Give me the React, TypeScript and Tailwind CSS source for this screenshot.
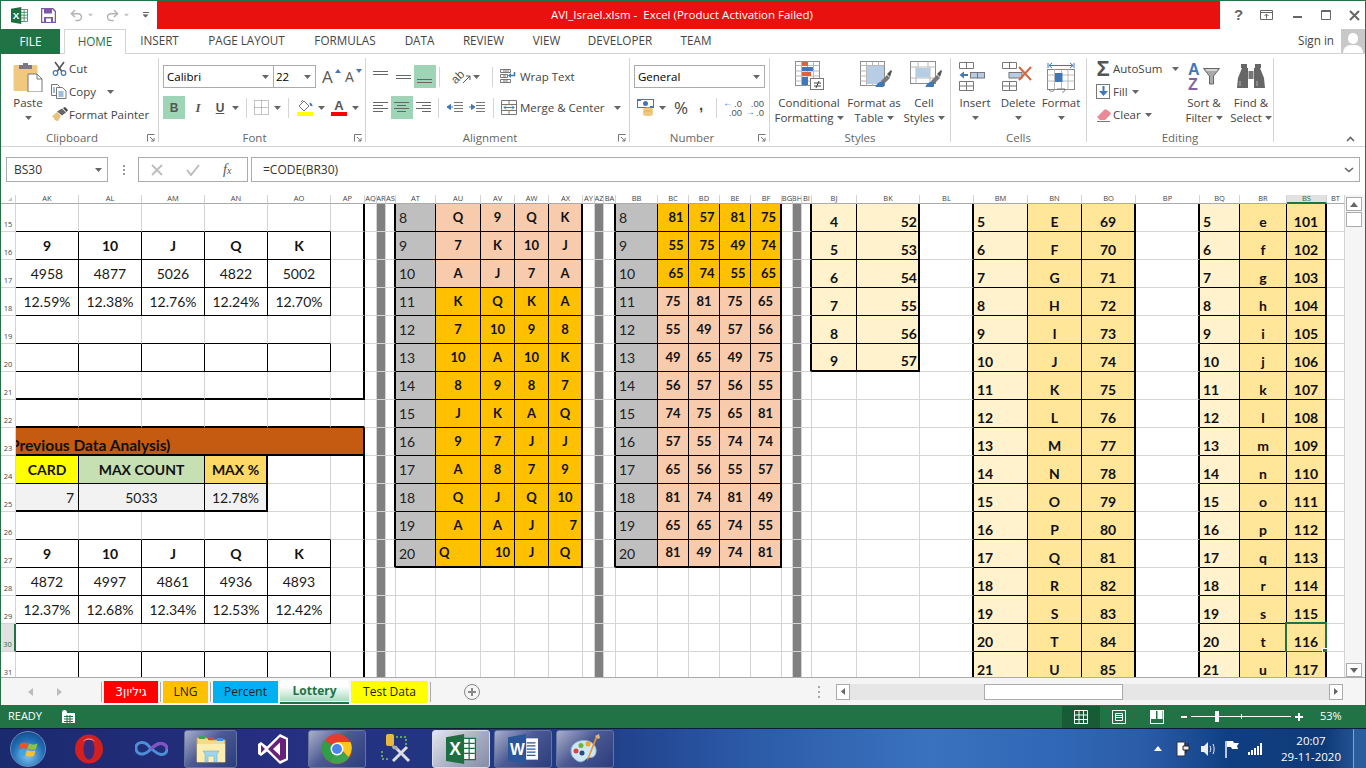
import React from "react";
import clsx from "clsx";
import { Undo2, Redo2 } from "lucide-react";

type Line = "g" | "k" | "K";
type Spec = {
  t?: string;
  cls?: string;
  r?: Line;
  b?: Line;
  span?: number;
  sel?: boolean;
};

const COLS = "AK AL AM AN AO AP AQ AR AS AT AU AV AW AX AY AZ BA BB BC BD BE BF BG BH BI BJ BK BL BM BN BO BP BQ BR BS BT".split(" ");

const rightLine: Record<Line, string> = {
  g: "border-r border-r-[#d4d4d4]",
  k: "border-r border-r-black",
  K: "border-r-2 border-r-black",
};
const bottomLine: Record<Line, string> = {
  g: "border-b border-b-[#d4d4d4]",
  k: "border-b border-b-black",
  K: "border-b-2 border-b-black",
};

const sheet = new Map<string, Spec>();
const put = (col: string, row: number, s: Spec) =>
  sheet.set(col + row, { ...sheet.get(col + row), ...s });
const range = (a: number, b: number) => Array.from({ length: b - a + 1 }, (_, i) => a + i);

const BOLD = "font-bold text-[#111]";
const LEFT = ["AK", "AL", "AM", "AN", "AO"];
const HEADS = ["9", "10", "J", "Q", "K"];

function statBlock(top: number, counts: string[], pcts: string[]) {
  LEFT.forEach((c, i) => {
    put(c, top - 1, { b: "k" });
    put(c, top, { t: HEADS[i], cls: BOLD, r: "k", b: "k" });
    put(c, top + 1, { t: counts[i], r: "k", b: "k" });
    put(c, top + 2, { t: pcts[i], r: "k", b: "k" });
  });
}
statBlock(16, ["4958", "4877", "5026", "4822", "5002"], ["12.59%", "12.38%", "12.76%", "12.24%", "12.70%"]);
statBlock(27, ["4872", "4997", "4861", "4936", "4893"], ["12.37%", "12.68%", "12.34%", "12.53%", "12.42%"]);
LEFT.forEach((c) => {
  put(c, 19, { b: "k" });
  put(c, 20, { r: "k", b: "k" });
  put(c, 30, { b: "k" });
  put(c, 31, { r: "k" });
  put(c, 21, { b: "K" });
  put(c, 22, { b: "K" });
});
put("AP", 21, { b: "K" });
put("AP", 22, { b: "K" });
[...range(15, 21), ...range(24, 31)].forEach((r) => put("AP", r, { r: "K" }));
put("AK", 23, {
  t: "Previous Data Analysis)",
  span: 6,
  r: "K",
  b: "K",
  cls: "bg-[#c55a11] font-bold !items-end !justify-start text-[15.5px] text-[#111] leading-[18px]",
});
put("AK", 24, { t: "CARD", cls: "bg-[#ffff00] " + BOLD, r: "k", b: "k" });
put("AL", 24, { t: "MAX COUNT", span: 2, cls: "bg-[#c6e0b4] " + BOLD, r: "k", b: "k" });
put("AN", 24, { t: "MAX %", cls: "bg-[#ffd966] " + BOLD, r: "K", b: "k" });
put("AK", 25, { t: "7", cls: "bg-[#f2f2f2] !justify-end pr-[4px]", r: "k", b: "K" });
put("AL", 25, { t: "5033", span: 2, cls: "bg-[#f2f2f2]", r: "k", b: "K" });
put("AN", 25, { t: "12.78%", cls: "bg-[#f2f2f2]", r: "K", b: "K" });

range(15, 31).forEach((r) => {
  ["AR", "AZ", "BH"].forEach((c) => put(c, r, { cls: "bg-[#808080]", r: "g" }));
});

const LABEL = "bg-[#bfbfbf] !justify-start pl-[3px] text-[#222]";
const PEACH = "bg-[#f8cbad] font-bold text-[13px] text-[#111]";
const AMBER = "bg-[#ffc000] font-bold text-[13px] text-[#111]";

const cards = [
  "Q 9 Q K", "7 K 10 J", "A J 7 A", "K Q K A", "7 10 9 8", "10 A 10 K", "8 9 8 7",
  "J K A Q", "9 7 J J", "A 8 7 9", "Q J Q 10", "A A J 7", "Q 10 J Q",
];
const codes = [
  "81 57 81 75", "55 75 49 74", "65 74 55 65", "75 81 75 65", "55 49 57 56", "49 65 49 75", "56 57 56 55",
  "74 75 65 81", "57 55 74 74", "65 56 55 57", "81 74 81 49", "65 65 74 55", "81 49 74 81",
];
cards.forEach((line, i) => {
  const row = 15 + i;
  const last = i === cards.length - 1;
  const b: Line = last ? "K" : "k";
  put("AS", row, { r: "K" });
  put("AT", row, { t: String(8 + i), cls: LABEL, r: "k", b });
  line.split(" ").forEach((t, j) => {
    const c = ["AU", "AV", "AW", "AX"][j];
    let cls = i < 3 ? PEACH : AMBER;
    if (row === 26 && j === 3) cls += " !justify-end pr-[4px]";
    if (row === 27 && j === 0) cls += " !justify-start pl-[3px]";
    if (row === 27 && j === 1) cls += " !justify-end pr-[4px]";
    put(c, row, { t, cls, r: j === 3 ? "K" : "k", b });
  });
  put("BA", row, { r: "K" });
  put("BB", row, { t: String(8 + i), cls: LABEL, r: "k", b });
  codes[i].split(" ").forEach((t, j) => {
    const c = ["BC", "BD", "BE", "BF"][j];
    const cls = i < 3 ? AMBER + " pl-[6px]" : PEACH;
    put(c, row, { t, cls, r: j === 3 ? "K" : "k", b });
  });
});

const LIGHT = "bg-[#fff2cc] !items-end leading-[18px] " + BOLD;
const GOLD = "bg-[#ffe699] !items-end leading-[18px] " + BOLD;
range(4, 9).forEach((n, i) => {
  const row = 15 + i;
  const b: Line = n === 9 ? "K" : "k";
  put("BI", row, { r: "K" });
  put("BJ", row, { t: String(n), cls: LIGHT, r: "k", b });
  put("BK", row, { t: String(48 + n), cls: LIGHT + " !justify-end pr-[1px]", r: "K", b });
});
const upper = "EFGHIJKLMNOPQRSTU";
const lower = upper.toLowerCase();
range(5, 21).forEach((n, i) => {
  const row = 15 + i;
  put("BL", row, { r: "K" });
  put("BM", row, { t: String(n), cls: LIGHT + " !justify-start pl-[3px]", r: "k", b: "k" });
  put("BN", row, { t: upper[i], cls: GOLD, r: "k", b: "k" });
  put("BO", row, { t: String(64 + n), cls: GOLD, r: "K", b: "k" });
  put("BP", row, { r: "K" });
  put("BQ", row, { t: String(n), cls: LIGHT + " !justify-start pl-[3px]", r: "k", b: "k" });
  put("BR", row, { t: lower[i], cls: GOLD, r: "k", b: "k" });
  put("BS", row, { t: String(96 + n), cls: GOLD, r: "K", b: "k", sel: row === 30 });
});

function Caret({ className }: { className?: string }) {
  return (
    <svg width="7" height="4" viewBox="0 0 7 4" className={clsx("shrink-0", className)}>
      <path d="M0 0h7L3.5 4z" fill="#666" />
    </svg>
  );
}

function BlueCaret({ className, up }: { className?: string; up?: boolean }) {
  return (
    <svg width="6" height="4" viewBox="0 0 6 4" className={clsx("absolute", className)}>
      <path d={up ? "M0 4h6L3 0z" : "M0 0h6L3 4z"} fill="#3f78b9" />
    </svg>
  );
}

function Launcher() {
  return (
    <svg width="8" height="8" viewBox="0 0 8 8" className="absolute right-[4px] bottom-[4px]">
      <path d="M.5 7.5v-7h7M3 3l4 4M7 4v3H4" fill="none" stroke="#777" />
    </svg>
  );
}

function Group({
  w,
  label,
  launcher,
  children,
}: {
  w: string;
  label: string;
  launcher?: boolean;
  children: React.ReactNode;
}) {
  return (
    <div className={clsx("relative flex flex-col items-stretch", w)}>
      <div className="flex-1">{children}</div>
      <div className={clsx("h-[16px] text-center text-[11.5px] leading-[16px] text-[#666]", launcher ? "pr-[16px]" : "pr-[1px]")}>{label}</div>
      {launcher && <Launcher />}
      <div className="absolute top-[4px] right-0 bottom-[4px] w-px bg-[#d4d4d4]" />
    </div>
  );
}

function SmallRow({
  icon,
  text,
  caret,
}: {
  icon: React.ReactNode;
  text: string;
  caret?: string;
}) {
  return (
    <div className="flex h-[23px] items-center">
      <div className="flex w-[18px] justify-center">{icon}</div>
      <span className="ml-[1px] whitespace-nowrap">{text}</span>
      {caret && <Caret className={caret} />}
    </div>
  );
}

function Big({
  icon,
  lines,
  w,
  iconCls,
}: {
  icon: React.ReactNode;
  lines: [string, string?];
  w: string;
  iconCls?: string;
}) {
  return (
    <div className={clsx("flex flex-col items-center pt-[8px] leading-[15px]", w)}>
      <div className={clsx("flex h-[30px] items-center justify-center", iconCls)}>{icon}</div>
      <span className="mt-[3px] whitespace-nowrap">{lines[0]}</span>
      {lines[1] ? (
        <span className="flex items-center gap-[3px] whitespace-nowrap">
          {lines[1]} <Caret />
        </span>
      ) : (
        <Caret className="mt-[6px]" />
      )}
    </div>
  );
}

function Lines({ rows, dx = [0, 0, 0], w = 15, y = 3 }: { rows: number[]; dx?: number[]; w?: number; y?: number }) {
  return (
    <svg width="16" height="14" viewBox="0 0 16 14">
      {rows.map((len, i) => (
        <rect key={i} x={dx[i]} y={y + i * 3} width={len || w} height="1" fill="#666" />
      ))}
    </svg>
  );
}

function PasteIcon() {
  return (
    <svg width="30" height="30" viewBox="0 0 30 30">
      <rect x="0.5" y="3" width="24" height="26" rx="1.5" fill="#f0c97f" />
      <path d="M6 3h4V1h5v2h4v4H6z" fill="#7a7a7a" />
      <path d="M15 12h9l5 5v13H15z" fill="#fff" stroke="#777" />
      <path d="M24 12v5h5" fill="none" stroke="#777" />
    </svg>
  );
}

function ScissorsIcon() {
  return (
    <svg width="15" height="15" viewBox="0 0 15 15">
      <path d="M3 1l6.5 9M12 1L5.5 10" stroke="#555" strokeWidth="1.6" fill="none" />
      <circle cx="3.5" cy="12" r="2.3" fill="none" stroke="#3f78b9" strokeWidth="1.2" />
      <circle cx="11.5" cy="12" r="2.3" fill="none" stroke="#3f78b9" strokeWidth="1.2" />
    </svg>
  );
}

function CopyIcon() {
  return (
    <svg width="16" height="15" viewBox="0 0 16 15">
      <path d="M.5.5h6l2 2v9h-8z" fill="#fff" stroke="#777" />
      <path d="M5.5 3.5h6l3.5 3.5v7.500h-9.500z" fill="#fff" stroke="#777" />
      <path d="M7.500 8h5M7.500 10h5M7.500 12h5" stroke="#3f78b9" />
      <path d="M2 4h2M2 6h2M2 8h2" stroke="#3f78b9" />
    </svg>
  );
}

function BrushIcon() {
  return (
    <svg width="17" height="15" viewBox="0 0 17 15">
      <path d="M1 9.500 6 5l4 4-3.500 5.500-2-1.500-1.500.5.5-2z" fill="#e8c17d" />
      <path d="M6 4.500 11 1.500l4 4-4 3z" fill="#666" />
      <path d="M12 1l2-1 3 3-1.500 2z" fill="#444" />
    </svg>
  );
}

function BordersIcon() {
  return (
    <svg width="15" height="15" viewBox="0 0 15 15">
      <path d="M.5.5h14v14H.5zM7.500.5v14M.5 7.500h14" fill="none" stroke="#888" strokeDasharray="1 1" />
    </svg>
  );
}

function FillIcon() {
  return (
    <div className="flex flex-col items-center">
      <svg width="17" height="13" viewBox="0 0 17 13">
        <path d="M3 7l5-5 5 5-5 5z" fill="#fff" stroke="#777" />
        <path d="M7 1 5 3" stroke="#777" />
        <path d="M13.500 3.500c1.800.3 3 1.800 3 4l-2.500-1z" fill="#3f78b9" />
      </svg>
      <div className="h-[4px] w-[16px] bg-[#ffff00]" />
    </div>
  );
}

function WrapIcon() {
  return (
    <svg width="16" height="15" viewBox="0 0 16 15">
      <path d="M.5.500h10v3H.5zM.5 10.500h10v3H.5z" fill="none" stroke="#777" />
      <path d="M.5 5.500h7v3H.5z" fill="none" stroke="#777" />
      <path d="M3 2h6M3 7h3M3 12h5" stroke="#777" />
      <path d="M14.500 3v3.500h-5" fill="none" stroke="#3f78b9" strokeWidth="1.500" />
      <path d="M11 4 8 6.500 11 9z" fill="#3f78b9" />
    </svg>
  );
}

function MergeIcon() {
  return (
    <svg width="16" height="15" viewBox="0 0 16 15">
      <path d="M.5.500h15v14H.5zM.5 4.500h15M.5 10.500h15M8 .500v4M8 10.500v4" fill="none" stroke="#777" />
      <path d="M3 7.500h10" stroke="#3f78b9" strokeWidth="1" />
      <path d="M5 5.500 3 7.500l2 2M11 5.500l2 2-2 2" fill="none" stroke="#3f78b9" />
    </svg>
  );
}

function IndentIcon({ flip }: { flip?: boolean }) {
  return (
    <svg width="16" height="11" viewBox="0 0 16 11">
      <path d="M7 .500h9M7 3.500h9M7 6.500h9M7 9.500h9" stroke="#777" />
      {flip ? (
        <path d="M0 5h4M2.500 2.500 6 5 2.500 7.500z" stroke="#3f78b9" fill="#3f78b9" />
      ) : (
        <path d="M6 5H2M3.500 2.500 0 5l3.500 2.500z" stroke="#3f78b9" fill="#3f78b9" />
      )}
    </svg>
  );
}

function AccountingIcon() {
  return (
    <svg width="18" height="17" viewBox="0 0 18 17">
      <rect x="0.500" y="0.500" width="16" height="8" fill="#fff" stroke="#3f78b9" />
      <rect x="0" y="0" width="4" height="2" fill="#3f78b9" />
      <rect x="13" y="7" width="4" height="2" fill="#3f78b9" />
      <circle cx="8.500" cy="4.500" r="2.500" fill="#3f78b9" />
      <ellipse cx="11" cy="10.500" rx="5" ry="2" fill="#f0c97f" />
      <ellipse cx="11" cy="13" rx="5" ry="2" fill="#eeb965" />
      <ellipse cx="11" cy="15" rx="5" ry="2" fill="#f0c97f" />
    </svg>
  );
}

function DecimalIcon({ more }: { more?: boolean }) {
  return (
    <div className="flex w-[18px] flex-col items-end font-['Liberation_Sans',sans-serif] text-[9.5px] leading-[9px] text-[#555]">
      <div className="flex items-center">
        {more && <span className="mr-[1px] text-[10px] leading-[8px] font-bold text-[#3f78b9]">&#8592;</span>}
        <span>{more ? ".0" : ".00"}</span>
      </div>
      <div className="flex items-center">
        {!more && <span className="mr-[1px] text-[10px] leading-[8px] font-bold text-[#3f78b9]">&#8594;</span>}
        <span>{more ? ".00" : ".0"}</span>
      </div>
    </div>
  );
}

function TableGrid({ children }: { children?: React.ReactNode }) {
  return (
    <svg width="32" height="32" viewBox="0 0 32 32">
      <rect x="0.500" y="0.500" width="24" height="24" fill="#fff" stroke="#8c8c8c" />
      <path d="M.500 4.500h24M.500 10h24M.500 15h24M.500 20h24M6.500.500v24M12.500.500v24M18.500.500v24" stroke="#b8b8b8" fill="none" />
      {children}
    </svg>
  );
}

function CondIcon() {
  return (
    <TableGrid>
      <rect x="7" y="1" width="6" height="4" fill="#d9653e" />
      <rect x="7" y="6" width="11" height="4" fill="#3f78b9" />
      <rect x="7" y="11" width="9" height="4" fill="#d9653e" />
      <rect x="7" y="16" width="6" height="8" fill="#3f78b9" />
      <rect x="15.500" y="17.500" width="13" height="11" fill="#fff" stroke="#777" />
      <path d="M19 22h7M19 25h7M24 20l-3 7" stroke="#444" />
    </TableGrid>
  );
}

function BrushOver() {
  return (
    <>
      <path d="M21 20 27 14l3 3-6 6z" fill="#777" />
      <path d="M27 13l4-4 1 1-2 6z" fill="#555" />
      <path d="M21 20.500c-3 1-5 3-5.500 5.500h8c1-2 1-4 0-5z" fill="#3f78b9" />
    </>
  );
}

function FormatTableIcon() {
  return (
    <TableGrid>
      <rect x="7" y="5" width="17" height="18" fill="#b7cde4" />
      <BrushOver />
    </TableGrid>
  );
}

function CellStylesIcon() {
  return (
    <svg width="32" height="32" viewBox="0 0 32 32">
      <rect x="0.500" y="0.500" width="25" height="22" fill="#fff" stroke="#8c8c8c" />
      <path d="M.500 6h25M.500 17h25M8 .500V6M18 .500V6M6 6v16.500M20 6v16.500" stroke="#b8b8b8" fill="none" />
      <rect x="6" y="7" width="14" height="9.500" fill="#b7cde4" />
      <BrushOver />
    </svg>
  );
}

function InsertIcon({ del }: { del?: boolean }) {
  return (
    <svg width="32" height="30" viewBox="0 0 32 30">
      <path d="M.500.500h14v6h-14zM7.500.500v6M.500 19.500h14v9h-14zM.500 24h14M7.500 19.500v9" fill="none" stroke="#777" />
      {del ? (
        <>
          <rect x="7" y="10.500" width="13" height="5.500" fill="#b7cde4" stroke="#777" />
          <path d="M17 5l12 13M29 5 17 18" stroke="#d9653e" strokeWidth="2" />
        </>
      ) : (
        <>
          <rect x="11.500" y="10.500" width="7" height="5.500" fill="#b7cde4" stroke="#777" />
          <rect x="18.500" y="10.500" width="7" height="5.500" fill="#b7cde4" stroke="#777" />
          <path d="M9 13H3" stroke="#3f78b9" strokeWidth="2" />
          <path d="M5 9.500 .500 13 5 16.500z" fill="#3f78b9" />
        </>
      )}
    </svg>
  );
}

function FormatCellIcon() {
  return (
    <svg width="29" height="31" viewBox="0 0 29 31">
      <path d="M1 1v5M27 1v5M2 3.500h24" fill="none" stroke="#3f78b9" />
      <path d="M5 1 2 3.500 5 6M23 1l3 2.500L23 6" fill="none" stroke="#3f78b9" />
      <rect x="0.500" y="7.500" width="27" height="20" fill="#fff" stroke="#888" />
      <path d="M.500 13h27M.500 19h27M7.500 7.500v20M14.500 7.500v20M21 7.500v20" stroke="#bbb" fill="none" />
      <rect x="8" y="11" width="7.500" height="9" fill="#3f78b9" />
      <path d="M2 27c0 3 5 3 6 0M10 27h8c0 3-2 3-3 3" fill="none" stroke="#777" />
    </svg>
  );
}

function SortIcon() {
  return (
    <div className="relative flex h-[30px] w-[32px] flex-col font-['Liberation_Sans',sans-serif] text-[16px] leading-[15px] font-bold">
      <span className="text-[#3f78b9]">A</span>
      <span className="text-[#8064a2]">Z</span>
      <svg width="18" height="17" viewBox="0 0 18 17" className="absolute top-[6px] right-[-1px]">
        <path d="M.500.500h16L10.500 8v8h-4V8z" fill="#aaa" stroke="#666" />
        <path d="M3 2h11" stroke="#fff" />
      </svg>
    </div>
  );
}

function BinocularsIcon() {
  return (
    <svg width="28" height="28" viewBox="0 0 28 28">
      <path d="M1 15 5 5h6v20H0zM27 15 23 5h-6v20h11z" fill="#666" />
      <rect x="4" y="1" width="6" height="4" fill="#666" />
      <rect x="18" y="1" width="6" height="4" fill="#666" />
      <rect x="11.500" y="8" width="5" height="8" fill="#777" />
      <path d="M3 18v5M20 18v5" stroke="#fff" strokeOpacity=".5" />
    </svg>
  );
}

function ExcelLogo({ size = 18 }: { size?: number }) {
  return (
    <svg width={size} height={size} viewBox="0 0 24 24">
      <rect x="9.500" y="3.500" width="14" height="17" fill="#fff" stroke="#1d6f42" />
      <path d="M14 7.500h9M14 11.500h9M14 15.500h9M18.500 4v16" stroke="#1d6f42" />
      <path d="M0 2.500 14.500 0v24L0 21.500z" fill="#1d6f42" />
      <text x="2.500" y="17" fontSize="14" fontWeight="bold" fontFamily="Liberation Sans, sans-serif" fill="#fff">
        X
      </text>
    </svg>
  );
}

function TitleBar() {
  return (
    <div className="flex h-[28px] bg-white">
      <div className="flex w-[156px] items-center">
        <div className="ml-[10px]">
          <ExcelLogo size={17} />
        </div>
        <svg width="15" height="15" viewBox="0 0 15 15" className="ml-[13px]">
          <path d="M.500.500h11l3 3v11H.500z" fill="#fff" stroke="#7e57a8" strokeWidth="1.500" />
          <path d="M3 1h8v4.500H3z" fill="#7e57a8" />
          <path d="M3 9h9v5H3z" fill="#7e57a8" />
          <rect x="5" y="10.500" width="5" height="3.500" fill="#fff" />
        </svg>
        <Undo2 size={15} strokeWidth={2.4} className="ml-[13px] text-[#b4b4b4]" />
        <Caret className="ml-[3px] scale-75 opacity-40" />
        <Redo2 size={15} strokeWidth={2.4} className="ml-[11px] text-[#b4b4b4]" />
        <Caret className="ml-[3px] scale-75 opacity-40" />
        <div className="ml-[12px] flex flex-col items-center gap-[1px]">
          <div className="h-px w-[6px] bg-[#666]" />
          <Caret className="scale-90" />
        </div>
      </div>
      <div className="flex w-[1063px] items-center justify-center bg-[#e8110f] text-[11.5px] text-white">
        <span className="ml-[-13px]">AVI_Israel.xlsm -&nbsp; Excel (Product Activation Failed)</span>
      </div>
      <div className="flex flex-1 items-center text-[#666]">
        <span className="ml-[11px] w-[15px] text-center font-['Liberation_Sans',sans-serif] text-[15px] font-bold">?</span>
        <svg width="14" height="10" viewBox="0 0 14 10" className="ml-[14px]">
          <path d="M.500.500h12v9H.500zM.500 2.500h12M6.500 8.500v-4M4.500 6l2-2 2 2" fill="none" stroke="#666" />
        </svg>
        <div className="mt-[3px] ml-[19px] h-[2px] w-[9px] bg-[#666]" />
        <svg width="10" height="10" viewBox="0 0 10 10" className="ml-[19px]">
          <path d="M.500.500h9v9h-9zM.500 1.500h9" fill="none" stroke="#666" />
        </svg>
        <svg width="11" height="11" viewBox="0 0 11 11" className="ml-[18px]">
          <path d="M1 1l9 9M10 1l-9 9" stroke="#666" strokeWidth="2" />
        </svg>
      </div>
    </div>
  );
}

function RibbonTabs() {
  const tabs = [
    ["INSERT", "w-[67px]"],
    ["PAGE LAYOUT", "w-[107px]"],
    ["FORMULAS", "w-[90px]"],
    ["DATA", "w-[59px]"],
    ["REVIEW", "w-[69px]"],
    ["VIEW", "w-[57px]"],
    ["DEVELOPER", "w-[90px]"],
    ["TEAM", "w-[62px]"],
  ];
  return (
    <div className="flex h-[25px] border-b border-b-[#d4d4d4] text-[11.7px] text-[#444]">
      <div className="relative flex h-[25px] w-[59px] items-center justify-center bg-[#217346] text-white">FILE</div>
      <div className="relative ml-[4px] flex h-[25px] w-[62px] items-center justify-center border-x border-t border-[#d4d4d4] bg-white text-[#217346]">
        HOME
      </div>
      {tabs.map(([t, w]) => (
        <div key={t} className={clsx("flex items-center justify-center", w)}>
          {t}
        </div>
      ))}
      <div className="ml-auto flex items-center">
        <span className="mr-[7px]">Sign in</span>
        <div className="relative h-[24px] w-[24px] overflow-hidden bg-[#c8c8c8]">
          <div className="absolute top-[4px] left-[7px] h-[11px] w-[10px] rounded-full bg-white" />
          <div className="absolute top-[16px] left-[2px] h-[14px] w-[20px] rounded-t-[8px] bg-white" />
        </div>
      </div>
    </div>
  );
}

function Ribbon() {
  const hi = "bg-[#9fd5b7]";
  return (
    <div className="flex h-[93px] border-b border-b-[#d4d4d4] text-[11.5px] text-[#444]">
      <Group w="w-[158px]" label="Clipboard" launcher>
        <div className="flex">
          <div className="ml-[11px] flex w-[32px] flex-col items-center pt-[8px] leading-[15px]">
            <PasteIcon />
            <span className="mt-[3px]">Paste</span>
            <Caret className="mt-[6px]" />
          </div>
          <div className="ml-[6px] pt-[3px]">
            <SmallRow icon={<ScissorsIcon />} text="Cut" />
            <SmallRow icon={<CopyIcon />} text="Copy" caret="ml-[11px]" />
            <SmallRow icon={<BrushIcon />} text="Format Painter" />
          </div>
        </div>
      </Group>

      <Group w="w-[207px]" label="Font" launcher>
        <div className="flex flex-col gap-[8px] pt-[11px] pl-[4px]">
          <div className="flex h-[23px] items-center">
            <div className="flex h-[23px] w-[111px] items-center justify-between border border-[#ababab] pr-[4px] pl-[3px] text-black">
              Calibri <Caret />
            </div>
            <div className="ml-[-1px] flex h-[23px] w-[43px] items-center justify-between border border-[#ababab] pr-[4px] pl-[2px] text-black">
              22 <Caret />
            </div>
            <div className="relative ml-[6px] w-[16px] text-[17px] leading-none text-[#555]">
              A
              <BlueCaret up className="top-[1px] right-[-3px]" />
            </div>
            <div className="relative ml-[7px] w-[14px] text-[14px] leading-none text-[#555]">
              A
              <BlueCaret className="top-[-1px] right-[-3px]" />
            </div>
          </div>
          <div className="flex h-[23px] items-center text-[#555]">
            <div className={clsx("flex h-[23px] w-[22px] items-center justify-center font-['Liberation_Sans',sans-serif] text-[12px] font-bold", hi)}>B</div>
            <div className="ml-[2px] flex w-[22px] justify-center font-['Liberation_Serif',serif] text-[13px] font-bold italic">I</div>
            <div className="flex w-[22px] justify-center font-['Liberation_Sans',sans-serif] text-[12px] font-bold underline">U</div>
            <Caret className="ml-[1px]" />
            <div className="mx-[7px] h-[20px] w-px bg-[#d4d4d4]" />
            <BordersIcon />
            <Caret className="ml-[5px]" />
            <div className="mx-[7px] h-[20px] w-px bg-[#d4d4d4]" />
            <FillIcon />
            <Caret className="ml-[5px]" />
            <div className="ml-[6px] flex w-[16px] flex-col items-center">
              <span className="font-['Liberation_Sans',sans-serif] text-[13px] leading-[13px] font-bold">A</span>
              <div className="h-[4px] w-[16px] bg-[#ff0000]" />
            </div>
            <Caret className="ml-[5px]" />
          </div>
        </div>
      </Group>

      <Group w="w-[264px]" label="Alignment" launcher>
        <div className="flex flex-col gap-[8px] pt-[11px] pl-[7px] text-[11.5px]">
          <div className="flex h-[23px] items-center">
            <Lines rows={[0, 0]} y={1} />
            <div className="ml-[7px]">
              <Lines rows={[0, 0]} y={5} />
            </div>
            <div className={clsx("ml-[2px] flex h-[23px] w-[22px] items-center justify-center pt-[6px]", hi)}>
              <Lines rows={[0, 0]} y={6} />
            </div>
            <div className="mx-[3px] h-[20px] w-px bg-[#d4d4d4]" />
            <div className="relative ml-[8px] flex h-[20px] w-[20px] items-center text-[#555]">
              <span className="-rotate-45 font-['Liberation_Sans',sans-serif] text-[12px]">ab</span>
              <svg width="8" height="9" viewBox="0 0 8 9" className="absolute right-0 bottom-[3px]">
                <path d="M0 8 7 1M3 1h4v4" fill="none" stroke="#555" />
              </svg>
            </div>
            <Caret className="ml-[2px]" />
            <div className="ml-[12px] h-[20px] w-px bg-[#d4d4d4]" />
            <div className="ml-[7px] flex w-[16px]">
              <WrapIcon />
            </div>
            <span className="ml-[4px]">Wrap Text</span>
          </div>
          <div className="flex h-[23px] items-center">
            <Lines rows={[0, 10, 0, 10]} y={1} />
            <div className={clsx("ml-[2px] flex h-[23px] w-[22px] items-center justify-center", hi)}>
              <Lines rows={[15, 9, 15, 9]} dx={[0, 3, 0, 3]} y={1} />
            </div>
            <div className="ml-[3px]">
              <Lines rows={[15, 9, 15, 9]} dx={[0, 6, 0, 6]} y={1} />
            </div>
            <div className="ml-[6px] h-[20px] w-px bg-[#d4d4d4]" />
            <div className="ml-[8px]">
              <IndentIcon />
            </div>
            <div className="ml-[6px]">
              <IndentIcon flip />
            </div>
            <div className="ml-[8px] h-[20px] w-px bg-[#d4d4d4]" />
            <div className="ml-[7px] flex w-[16px]">
              <MergeIcon />
            </div>
            <span className="ml-[3px]">Merge &amp; Center</span>
            <Caret className="ml-[9px]" />
          </div>
        </div>
      </Group>

      <Group w="w-[140px]" label="Number" launcher>
        <div className="flex flex-col gap-[8px] pt-[11px] pl-[4px]">
          <div className="flex h-[23px] w-[131px] items-center justify-between border border-[#ababab] pr-[4px] pl-[3px] text-black">
            General <Caret />
          </div>
          <div className="flex h-[23px] items-center">
            <div className="ml-[3px]">
              <AccountingIcon />
            </div>
            <Caret className="ml-[4px]" />
            <span className="ml-[6px] w-[18px] text-center text-[17px] leading-none">%</span>
            <span className="ml-[4px] mt-[-7px] w-[14px] text-center font-['Liberation_Sans',sans-serif] text-[15px] leading-[9px] font-bold">,</span>
            <div className="ml-[8px] h-[20px] w-px bg-[#d4d4d4]" />
            <div className="ml-[7px]">
              <DecimalIcon more />
            </div>
            <div className="ml-[4px]">
              <DecimalIcon />
            </div>
          </div>
        </div>
      </Group>

      <Group w="w-[181px]" label="Styles">
        <div className="flex pl-[3px]">
          <Big w="w-[72px]" iconCls="ml-[4px]" icon={<CondIcon />} lines={["Conditional", "Formatting"]} />
          <Big w="w-[58px]" iconCls="ml-[4px]" icon={<FormatTableIcon />} lines={["Format as", "Table"]} />
          <Big w="w-[42px]" iconCls="ml-[4px]" icon={<CellStylesIcon />} lines={["Cell", "Styles"]} />
        </div>
      </Group>

      <Group w="w-[136px]" label="Cells">
        <div className="flex pl-[3px]">
          <Big w="w-[42px]" icon={<InsertIcon />} lines={["Insert"]} />
          <Big w="w-[44px]" icon={<InsertIcon del />} lines={["Delete"]} />
          <Big w="w-[42px]" icon={<FormatCellIcon />} lines={["Format"]} />
        </div>
      </Group>

      <Group w="w-[187px]" label="Editing">
        <div className="flex">
          <div className="ml-[7px] w-[90px] pt-[3px]">
            <SmallRow
              icon={<span className="font-['Liberation_Sans',sans-serif] text-[22px] leading-none font-bold text-[#555]">&#931;</span>}
              text="AutoSum"
              caret="ml-[10px]"
            />
            <SmallRow
              icon={
                <div className="flex h-[15px] w-[14px] items-center justify-center border border-[#777] bg-white">
                  <svg width="9" height="11" viewBox="0 0 9 11">
                    <path d="M4.500 0v7" stroke="#3f78b9" strokeWidth="2" />
                    <path d="M0 5l4.500 5L9 5z" fill="#3f78b9" />
                  </svg>
                </div>
              }
              text="Fill"
              caret="ml-[4px]"
            />
            <SmallRow
              icon={
                <svg width="15" height="14" viewBox="0 0 15 14">
                  <path d="M1 9l7-7c1-1 2-1 3 0l3 2c1 1 1 2 0 3l-5 5H4z" fill="#ea8a97" />
                  <path d="M1 13.500h13" stroke="#777" />
                </svg>
              }
              text="Clear"
              caret="ml-[4px]"
            />
          </div>
          <Big w="w-[40px]" icon={<SortIcon />} lines={["Sort &", "Filter"]} />
          <Big w="w-[46px] ml-[4px]" icon={<BinocularsIcon />} lines={["Find &", "Select"]} />
        </div>
      </Group>

      <div className="flex flex-1 items-end justify-end pr-[10px] pb-[4px]">
        <svg width="9" height="6" viewBox="0 0 9 6">
          <path d="M1 5l3.500-3.500L8 5" fill="none" stroke="#666" strokeWidth="1.600" />
        </svg>
      </div>
    </div>
  );
}

function FormulaBar() {
  return (
    <div className="flex h-[48px] items-start bg-white pt-[10px] pr-[5px] pl-[5px] text-[12px] text-[#333]">
      <div className="flex h-[25px] w-[102px] items-center justify-between border border-[#ababab] pr-[5px] pl-[7px]">
        BS30 <Caret />
      </div>
      <div className="ml-[14px] flex h-[25px] w-[3px] flex-col items-center justify-center gap-[2px]">
        <div className="h-[2px] w-[2px] bg-[#999]" />
        <div className="h-[2px] w-[2px] bg-[#999]" />
        <div className="h-[2px] w-[2px] bg-[#999]" />
      </div>
      <div className="ml-[13px] flex h-[25px] w-[110px] items-center border border-[#ababab]">
        <svg width="12" height="12" viewBox="0 0 12 12" className="ml-[12px]">
          <path d="M1 1l10 10M11 1 1 11" stroke="#bdbdbd" strokeWidth="1.800" />
        </svg>
        <svg width="14" height="12" viewBox="0 0 14 12" className="ml-[23px]">
          <path d="M1 6l4 5 8-10" fill="none" stroke="#bdbdbd" strokeWidth="2" />
        </svg>
        <span className="ml-[23px] font-['Liberation_Serif',serif] text-[14px] italic text-[#555]">
          f<span className="text-[10px]">x</span>
        </span>
      </div>
      <div className="ml-[3px] flex h-[25px] flex-1 items-center justify-between border border-[#ababab] pr-[5px] pl-[11px]">
        =CODE(BR30)
        <svg width="10" height="6" viewBox="0 0 10 6">
          <path d="M1 1l4 3.500L9 1" fill="none" stroke="#666" strokeWidth="1.600" />
        </svg>
      </div>
    </div>
  );
}

function GridCell({ spec }: { spec: Spec }) {
  const { t, cls, r = "g", b = "g", span, sel } = spec;
  const spanCls = span === 6 ? "col-span-6" : span === 2 ? "col-span-2" : "";
  return (
    <div
      className={clsx(
        "relative flex items-center justify-center whitespace-nowrap text-[#1a1a1a]",
        !sel && "overflow-hidden",
        rightLine[r],
        bottomLine[b],
        spanCls,
        cls
      )}
    >
      {t === "Previous Data Analysis)" ? <span className="ml-[-6px]">{t}</span> : t}
      {sel && (
        <div className="absolute inset-[-2px] border-2 border-[#217346]">
          <div className="absolute right-[-3px] bottom-[-3px] h-[6px] w-[6px] border border-white bg-[#217346]" />
        </div>
      )}
    </div>
  );
}

function Sheet() {
  const skip = new Set(["AL23", "AM23", "AN23", "AO23", "AP23", "AM24", "AM25"]);
  return (
    <div className="flex h-[482px] overflow-hidden">
      <div className="grid h-[490px] grid-cols-[15px_63px_63px_63px_63px_63px_34px_12px_9px_10px_40px_45px_34px_34px_34px_12px_9px_12px_42px_31px_31px_31px_31px_11px_9px_10px_45px_63px_54px_54px_54px_54px_64px_40px_47px_40px_18px] grid-rows-[9px_repeat(17,28px)] font-['Lato',sans-serif] text-[14px]">
        <div className="relative border-r border-b border-r-[#d4d4d4] border-b-[#ababab]">
          <div className="absolute top-[2px] right-[3px] h-0 w-0 border-b-[4px] border-l-[4px] border-b-[#c8c8c8] border-l-transparent" />
        </div>
        {COLS.map((c) => (
          <div
            key={c}
            className={clsx(
              "flex items-center justify-center overflow-hidden border-r border-r-[#d4d4d4] font-['Open_Sans',sans-serif] text-[7.500px] leading-none whitespace-nowrap text-[#444]",
              c === "BS"
                ? "border-b-2 border-b-[#217346] bg-[#e1e1e1] text-[#217346]"
                : "border-b border-b-[#ababab]"
            )}
          >
            {c}
          </div>
        ))}
        {range(15, 31).map((row) => (
          <React.Fragment key={row}>
            <div
              className={clsx(
                "flex items-end justify-center pb-[3px] font-['Open_Sans',sans-serif] text-[7.500px] leading-none text-[#444]",
                row === 30
                  ? "border-r-2 border-r-[#217346] border-b border-b-[#d4d4d4] bg-[#e1e1e1] text-[#217346]"
                  : "border-r border-b border-r-[#d4d4d4] border-b-[#d4d4d4]"
              )}
            >
              {row}
            </div>
            {COLS.map((c) =>
              skip.has(c + row) ? null : <GridCell key={c} spec={sheet.get(c + row) ?? {}} />
            )}
          </React.Fragment>
        ))}
      </div>
      <VScroll />
    </div>
  );
}

function VScroll() {
  return (
    <div className="flex flex-1 flex-col items-center bg-[#f5f5f5] pt-[2px] pr-[2px]">
      <div className="flex h-[14px] w-[16px] items-center justify-center border border-[#ababab] bg-white">
        <svg width="8" height="5" viewBox="0 0 8 5">
          <path d="M0 5l4-5 4 5z" fill="#666" />
        </svg>
      </div>
      <div className="mt-[1px] h-[15px] w-[16px] border border-[#ababab] bg-white" />
      <div className="mt-auto flex h-[14px] w-[16px] items-center justify-center border border-[#ababab] bg-white">
        <svg width="8" height="5" viewBox="0 0 8 5">
          <path d="M0 0l4 5 4-5z" fill="#666" />
        </svg>
      </div>
    </div>
  );
}

function SheetTabs() {
  const tab = "flex h-[22px] items-center justify-center";
  return (
    <div className="flex h-[28px] items-center border-t border-t-[#ababab] bg-[#f5f5f5] text-[12px] text-[#222]">
      <svg width="5" height="8" viewBox="0 0 5 8" className="ml-[27px]">
        <path d="M5 0 0 4l5 4z" fill="#bbb" />
      </svg>
      <svg width="5" height="8" viewBox="0 0 5 8" className="ml-[24px]">
        <path d="M0 0l5 4-5 4z" fill="#bbb" />
      </svg>
      <div className="ml-[39px] h-[20px] w-px bg-[#ababab]" />
      <div className={clsx(tab, "ml-[2px] w-[54px] bg-[#ff0000] font-['DejaVu_Sans',sans-serif] text-[12px] text-white")}>גיליון3</div>
      <div className="ml-[2px] h-[20px] w-px bg-[#ababab]" />
      <div className={clsx(tab, "ml-[2px] w-[45px] bg-[#ffc000]")}>LNG</div>
      <div className="ml-[2px] h-[20px] w-px bg-[#ababab]" />
      <div className={clsx(tab, "ml-[2px] w-[65px] bg-[#00b0f0]")}>Percent</div>
      <div className="ml-[2px] flex h-[25px] w-[69px] items-start border-b-2 border-b-[#217346] pt-[1px]">
        <div className="flex h-[21px] w-full items-center justify-center bg-[linear-gradient(#ffffff,#ffffff_30%,#a9dcc0)] font-bold text-[#217346]">
          Lottery
        </div>
      </div>
      <div className={clsx(tab, "ml-[2px] w-[77px] bg-[#ffff00]")}>Test Data</div>
      <div className="ml-[2px] h-[20px] w-px bg-[#ababab]" />
      <div className="ml-[33px] flex h-[16px] w-[16px] items-center justify-center rounded-full border border-[#888]">
        <svg width="10" height="10" viewBox="0 0 10 10">
          <path d="M5 1v8M1 5h8" stroke="#888" strokeWidth="2" />
        </svg>
      </div>
      <div className="ml-[338px] flex flex-col gap-[3px]">
        <div className="h-[2px] w-[2px] bg-[#aaa]" />
        <div className="h-[2px] w-[2px] bg-[#aaa]" />
        <div className="h-[2px] w-[2px] bg-[#aaa]" />
      </div>
      <div className="ml-[16px] flex h-[16px] w-[507px] items-center bg-[#e6e6e6]">
        <div className="flex h-[16px] w-[14px] items-center justify-center border border-[#ababab] bg-white">
          <svg width="4" height="7" viewBox="0 0 4 7">
            <path d="M4 0 0 3.500 4 7z" fill="#666" />
          </svg>
        </div>
        <div className="ml-[134px] h-[16px] w-[139px] border border-[#ababab] bg-white" />
        <div className="ml-auto flex h-[16px] w-[14px] items-center justify-center border border-[#ababab] bg-white">
          <svg width="4" height="7" viewBox="0 0 4 7">
            <path d="M0 0l4 3.500L0 7z" fill="#666" />
          </svg>
        </div>
      </div>
    </div>
  );
}

function StatusBar() {
  return (
    <div className="flex h-[23px] items-center bg-[#217346] text-[11px] text-white">
      <span className="ml-[7px]">READY</span>
      <svg width="13" height="13" viewBox="0 0 13 13" className="ml-[20px]">
        <rect x="0" y="3" width="13" height="10" fill="#fff" />
        <circle cx="2.500" cy="2.500" r="2.500" fill="#fff" />
        <path d="M2 6.500h9M2 9h9M2 11.500h9M5 5v8M8 5v8" stroke="#217346" />
      </svg>
      <div className="ml-[987px] flex h-[22px] w-[38px] items-center justify-center bg-[#185c37]">
        <svg width="14" height="14" viewBox="0 0 14 14">
          <path d="M.500.500h13v13H.500zM.500 5h13M.500 9.500h13M5 .500v13M9.500 .500v13" fill="none" stroke="#fff" />
        </svg>
      </div>
      <svg width="14" height="14" viewBox="0 0 14 14" className="ml-[12px]">
        <path d="M.500.500h13v13H.500zM3.500 3.500h7v7h-7zM4 5.500h6M4 7.500h6" fill="none" stroke="#fff" />
      </svg>
      <svg width="14" height="14" viewBox="0 0 14 14" className="ml-[24px]">
        <rect x="0.500" y="0.500" width="13" height="13" fill="none" stroke="#fff" />
        <rect x="1" y="1" width="5" height="8" fill="#fff" />
        <rect x="7.500" y="1" width="5" height="8" fill="#fff" />
      </svg>
      <div className="ml-[17px] h-[2px] w-[6px] bg-white" />
      <div className="relative ml-[4px] h-px w-[100px] bg-white">
        <div className="absolute top-[-5px] left-[24px] h-[11px] w-[4px] bg-white" />
        <div className="absolute top-[-2px] left-[50px] h-[5px] w-px bg-white" />
      </div>
      <svg width="8" height="8" viewBox="0 0 8 8" className="ml-[4px]">
        <path d="M4 0v8M0 4h8" stroke="#fff" strokeWidth="2" />
      </svg>
      <span className="ml-[17px]">53%</span>
    </div>
  );
}

function TaskButton({ active, w, children }: { active?: boolean; w: string; children: React.ReactNode }) {
  return (
    <div
      className={clsx(
        "flex h-[38px] items-center justify-center rounded-[3px] border",
        w,
        active
          ? "border-[#d8dce6] bg-[linear-gradient(135deg,#e3e6ee,#a3a9bd_60%,#858da8)]"
          : "border-[#66759f] bg-[linear-gradient(135deg,#aab0c8,#4c5a93_45%,#2b3d7e)]"
      )}
    >
      {children}
    </div>
  );
}

function Taskbar() {
  return (
    <div className="flex h-[40px] items-center border-t border-t-[#0e1b3f] bg-[linear-gradient(90deg,#1a2a6e_0%,#262f80_20%,#1f3c85_43%,#2c5ba8_55%,#3a72c0_68%,#2f67b6_78%,#2b5ba6_84%,#0f3f82_90%,#0f3a78_97%,#2a5c9e_100%)]">
      <div className="relative ml-[10px] h-[36px] w-[36px] overflow-hidden rounded-full border border-[#6c8bb5] bg-[radial-gradient(circle_at_50%_70%,#7fc4f0,#1f6cb5_55%,#123b73)]">
        <svg width="20" height="18" viewBox="0 0 20 18" className="absolute top-[9px] left-[8px]">
          <path d="M1 3c3-2 5-2 8-.5L7.500 8C5 7 3 7 .5 8z" fill="#e8532b" />
          <path d="M10 2.500c3 1.500 5 1.500 8.500 0L17 8c-3 1-5 1-8.500-.5z" fill="#8cc63f" />
          <path d="M.5 9c3-1 5-1 6.500 0L5.500 15c-2-1-4-1-6 0z" fill="#3ea6e0" />
          <path d="M8 9c3 1.500 5 1.500 8.500.5L15 15c-3 1-5 1-8.500-.5z" fill="#fbc02d" />
        </svg>
      </div>
      <div className="ml-[28px] h-[30px] w-[30px]">
        <svg width="30" height="30" viewBox="0 0 30 30">
          <ellipse cx="15" cy="15" rx="14" ry="14.500" fill="#d3201f" />
          <ellipse cx="15" cy="15" rx="5.500" ry="10.500" fill="#3a2a7a" />
          <path d="M9 8C11 3 19 3 21 8 18 5 12 5 9 8z" fill="#f07b7b" />
        </svg>
      </div>
      <div className="ml-[31px] h-[18px] w-[33px]">
        <svg width="33" height="18" viewBox="0 0 33 18">
          <path d="M16 9C13 4 9 2 6 2.500 2 3 .5 6 1 9c.5 3 3 5.500 7 5 3-.5 6-3 8-5 2-2 5-5 9-5.500 4-.5 7 2.500 7 5.500s-2 6-6 5.500c-3-.5-6-2.500-9-5.500z" fill="none" stroke="#4c8fd6" strokeWidth="3" />
          <path d="M16 9c2-2 5-5 9-5.500 4-.5 7 2.500 7 5.500" fill="none" stroke="#8a4fc0" strokeWidth="3" />
        </svg>
      </div>
      <div className="ml-[16px]">
        <TaskButton w="w-[53px]">
          <svg width="32" height="30" viewBox="0 0 32 30">
            <path d="M2 4h10l2 2h16v22H2z" fill="#f2dc8a" stroke="#c9a94c" />
            <path d="M2 10h28v18H2z" fill="#fbeeb0" />
            <rect x="4" y="2" width="6" height="3" fill="#3aa655" />
            <rect x="13" y="3" width="6" height="3" fill="#d24b3e" />
            <rect x="22" y="4" width="6" height="3" fill="#3f8fdc" />
            <path d="M8 17h16l-2 3v8h-3v-6h-6v6h-3v-8z" fill="#9fd6ee" stroke="#5aa6cf" strokeWidth=".5" />
          </svg>
        </TaskButton>
      </div>
      <div className="ml-[8px] flex w-[55px] justify-center">
        <svg width="32" height="32" viewBox="0 0 32 32">
          <path d="M23 1 31 5v22l-8 4-13-12.500L4 23l-3-2V11l3-2 6 4.500z" fill="#fff" />
          <path d="M23 4 29 6.500v19L23 28 11 16zM4 12v8l4-4z" fill="#68217a" />
          <path d="M23 9.500 16 16l7 6.500z" fill="#fff" />
        </svg>
      </div>
      <div className="ml-[8px]">
        <TaskButton w="w-[58px]">
          <svg width="30" height="30" viewBox="0 0 30 30">
            <circle cx="15" cy="15" r="15" fill="#e53c2e" />
            <path d="M15 15 28 22A15 15 0 0 1 8 28z" fill="#3da44d" />
            <path d="M15 15 8 28A15 15 0 0 1 2.500 6z" fill="#2f9e44" />
            <path d="M15 8h13.500a15 15 0 0 1-2 15L19 15z" fill="#f9c71e" />
            <circle cx="15" cy="15" r="6.500" fill="#fff" />
            <circle cx="15" cy="15" r="5" fill="#4a86e8" />
          </svg>
        </TaskButton>
      </div>
      <div className="ml-[15px] h-[32px] w-[34px]">
        <svg width="34" height="32" viewBox="0 0 34 32">
          <rect x="5" y="1" width="8" height="12" rx="2" fill="#e8b93c" />
          <path d="M15 4h10v12M1 18v8h8" fill="none" stroke="#5aa84f" strokeWidth="2" strokeDasharray="2 2" />
          <path d="M12 28 26 14M14 14l14 14" stroke="#ddd" strokeWidth="3" />
          <path d="M10 12l6 1 1 4-5-1z" fill="#aaa" />
        </svg>
      </div>
      <div className="ml-[17px]">
        <TaskButton active w="w-[58px]">
          <ExcelLogo size={30} />
        </TaskButton>
      </div>
      <div className="ml-[4px]">
        <TaskButton w="w-[58px]">
          <svg width="30" height="30" viewBox="0 0 24 24">
            <rect x="10" y="3.500" width="14" height="17" fill="#fff" />
            <path d="M15 7h7M15 9.500h7M15 12h7M15 14.500h7M15 17h7" stroke="#2b579a" />
            <path d="M0 2.500 14.500 0v24L0 21.500z" fill="#2b579a" />
            <text x="1.500" y="16.500" fontSize="12.500" fontWeight="bold" fontFamily="Liberation Sans, sans-serif" fill="#fff">
              W
            </text>
          </svg>
        </TaskButton>
      </div>
      <div className="ml-[4px]">
        <TaskButton w="w-[58px]">
          <svg width="32" height="30" viewBox="0 0 32 30">
            <path d="M2 17C2 9 11 5 19 7c7 2 10 9 7 14-2 4-6 1-9 4-3 3-6 4-10 1-3-2-5-5-5-9z" fill="#cfe6f5" stroke="#8fb7d1" />
            <circle cx="7" cy="17" r="2.500" fill="#d9453c" />
            <circle cx="12" cy="11.500" r="2.500" fill="#6cb33f" />
            <circle cx="19" cy="10" r="2.500" fill="#f2a81d" />
            <circle cx="13" cy="19" r="2.500" fill="#274b7a" />
            <path d="M29 2 20 24l-2 3 1-4 8-21z" fill="#e8902a" />
            <path d="M26 2l4-2 1 4-2 1z" fill="#d8b48a" />
          </svg>
        </TaskButton>
      </div>
      <div className="ml-auto flex items-center text-white">
        <svg width="8" height="5" viewBox="0 0 8 5">
          <path d="M0 5l4-5 4 5z" fill="#fff" />
        </svg>
        <svg width="16" height="17" viewBox="0 0 16 17" className="ml-[13px]">
          <path d="M2 2h8v14H2z" fill="#fff" stroke="#333" />
          <path d="M8 6h6v4H8zM10 3v3M13 3v3M11 10v3" stroke="#222" fill="#eee" />
        </svg>
        <svg width="16" height="16" viewBox="0 0 16 16" className="ml-[9px]">
          <path d="M1 5h3l4-4v14l-4-4H1z" fill="#eee" />
          <path d="M10 5c1 2 1 4 0 6M13 3c1.500 3 1.500 7 0 10" fill="none" stroke="#eee" />
        </svg>
        <svg width="15" height="18" viewBox="0 0 15 18" className="ml-[9px]">
          <path d="M1 1v17" stroke="#fff" strokeWidth="1.400" />
          <path d="M2 1h6l1 2h5l-2 3 1 3H7L6 7H2z" fill="#fff" />
        </svg>
        <svg width="16" height="13" viewBox="0 0 16 13" className="ml-[8px]">
          <rect x="0" y="10" width="2" height="3" fill="#fff" />
          <rect x="3" y="8" width="2" height="5" fill="#fff" />
          <rect x="6" y="6" width="2" height="7" fill="#fff" />
          <rect x="9" y="4" width="2" height="9" fill="#fff" />
          <rect x="12" y="1" width="2" height="12" fill="#fff" />
        </svg>
        <div className="ml-[17px] flex w-[60px] flex-col items-center text-[11.5px] leading-[16px] whitespace-nowrap">
          <span>20:07</span>
          <span>29-11-2020</span>
        </div>
        <div className="ml-[12px] h-[40px] w-[13px] border-l border-l-[#7fa3d1] bg-[#2a5c9e]" />
      </div>
    </div>
  );
}

export default function App() {
  return (
    <div className="flex h-[768px] w-[1366px] flex-col overflow-hidden bg-white font-['Open_Sans',sans-serif]">
      <div className="border-x border-t border-x-[#217346] border-t-[#217346]">
        <TitleBar />
        <RibbonTabs />
        <Ribbon />
        <FormulaBar />
        <Sheet />
        <SheetTabs />
      </div>
      <div className="border-x border-x-[#217346]">
        <StatusBar />
      </div>
      <Taskbar />
    </div>
  );
}
